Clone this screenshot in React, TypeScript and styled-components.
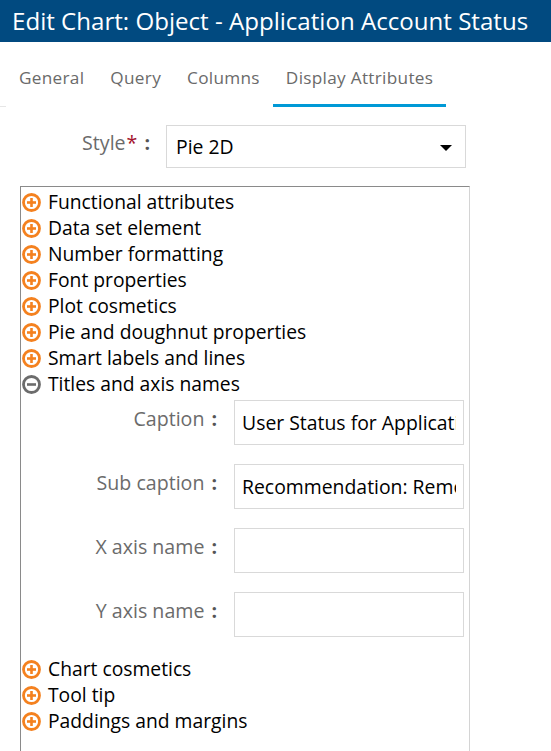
import React from "react";
import styled, { createGlobalStyle } from "styled-components";

const Global = createGlobalStyle`
  html, body { margin: 0; padding: 0; background: #fff; }
  body { font-family: "Open Sans", "Noto Sans", sans-serif; overflow: hidden; }
  * { box-sizing: border-box; }
`;

const Page = styled.div`
  width: 551px;
  height: 751px;
  overflow: hidden;
  display: flex;
  flex-direction: column;
`;

const Header = styled.div`
  height: 42px;
  background: #014a80;
  color: #fff;
  font-size: 24.1px;
  line-height: 42px;
  padding-left: 12px;
  white-space: nowrap;
`;

const TabBar = styled.div`
  display: flex;
  padding-top: 25px;
  &::before {
    content: "";
    width: 6px;
    border-bottom: 1px solid #e6e6e6;
  }
`;

const Tab = styled.div<{ $active?: boolean }>`
  padding: 0 13px 15px;
  font-size: 17.2px;
  line-height: 22px;
  color: #6a6a6a;
  letter-spacing: 0.3px;
  white-space: nowrap;
  border-bottom: 3px solid ${(p) => (p.$active ? "#0099d6" : "transparent")};
`;

const StyleRow = styled.div`
  display: grid;
  grid-template-columns: 150px 300px;
  column-gap: 16px;
  margin-top: 18px;
  align-items: center;
`;

const Label = styled.div`
  display: flex;
  justify-content: flex-end;
  align-items: center;
  font-size: 19.6px;
  color: #6b6b6b;
  white-space: nowrap;
  margin-top: -8px;
`;

const Required = styled.span`
  color: #a3132d;
  margin-left: 1px;
`;

const Colon = styled.span`
  margin-left: 7px;
  font-weight: 700;
  color: #555;
`;

const Select = styled.div`
  height: 43px;
  border: 1px solid #d9d9d9;
  display: flex;
  align-items: center;
  justify-content: space-between;
  padding: 0 13px 0 9px;
  font-size: 19.4px;
  color: #000;
`;

const Caret = styled.span`
  width: 0;
  height: 0;
  border-left: 6px solid transparent;
  border-right: 6px solid transparent;
  border-top: 6px solid #000;
  margin-top: 2px;
`;

const Panel = styled.div`
  margin: 18px 0 0 20px;
  width: 450px;
  flex: 1;
  border-top: 1px solid #8a8a8a;
  border-left: 1px solid #8a8a8a;
  border-right: 1px solid #d4d4d4;
  padding-top: 1px;
`;

const Item = styled.div`
  display: flex;
  align-items: center;
  height: 26px;
  font-size: 19.3px;
  color: #000;
  gap: 7px;
  padding-left: 1px;
  white-space: nowrap;
`;

const IconBox = styled.svg`
  flex: none;
  margin-top: 2px;
`;

const Fields = styled.div`
  display: grid;
  grid-template-columns: 1fr 230px;
  grid-auto-rows: 45px;
  column-gap: 17px;
  row-gap: 19px;
  padding: 4px 5px 18px 0;
`;

const FieldInput = styled.input`
  width: 100%;
  height: 100%;
  border: 1px solid #d9d9d9;
  border-radius: 0;
  padding: 0 7px;
  margin: 0;
  font-family: "Open Sans", "Noto Sans", sans-serif;
  font-size: 19.4px;
  color: #000;
  background: #fff;
  outline: none;
`;

const PlusIcon = ({ open }: { open?: boolean }) => {
  const c = open ? "#6c6c6c" : "#f4811f";
  return (
    <IconBox width="19" height="19" viewBox="0 0 19 19">
      <circle cx="9.5" cy="9.5" r="8" fill="none" stroke={c} strokeWidth="2.8" />
      <line x1="5" y1="9.5" x2="14" y2="9.5" stroke={c} strokeWidth="2.6" />
      {!open && <line x1="9.5" y1="5" x2="9.5" y2="14" stroke={c} strokeWidth="2.6" />}
    </IconBox>
  );
};

const before = [
  "Functional attributes",
  "Data set element",
  "Number formatting",
  "Font properties",
  "Plot cosmetics",
  "Pie and doughnut properties",
  "Smart labels and lines",
];
const after = ["Chart cosmetics", "Tool tip", "Paddings and margins"];
const fields = [
  { label: "Caption", value: "User Status for Application Account" },
  { label: "Sub caption", value: "Recommendation: Remove" },
  { label: "X axis name", value: "" },
  { label: "Y axis name", value: "" },
];

export default function App() {
  return (
    <Page>
      <Global />
      <Header>Edit Chart: Object - Application Account Status</Header>
      <TabBar>
        <Tab>General</Tab>
        <Tab>Query</Tab>
        <Tab>Columns</Tab>
        <Tab $active>Display Attributes</Tab>
      </TabBar>
      <StyleRow>
        <Label>
          Style<Required>*</Required>
          <Colon>:</Colon>
        </Label>
        <Select>
          Pie 2D
          <Caret />
        </Select>
      </StyleRow>
      <Panel>
        {before.map((t) => (
          <Item key={t}>
            <PlusIcon />
            {t}
          </Item>
        ))}
        <Item>
          <PlusIcon open />
          Titles and axis names
        </Item>
        <Fields>
          {fields.map((f) => (
            <React.Fragment key={f.label}>
              <Label>
                {f.label}
                <Colon>:</Colon>
              </Label>
              <FieldInput readOnly value={f.value} />
            </React.Fragment>
          ))}
        </Fields>
        {after.map((t) => (
          <Item key={t}>
            <PlusIcon />
            {t}
          </Item>
        ))}
      </Panel>
    </Page>
  );
}
